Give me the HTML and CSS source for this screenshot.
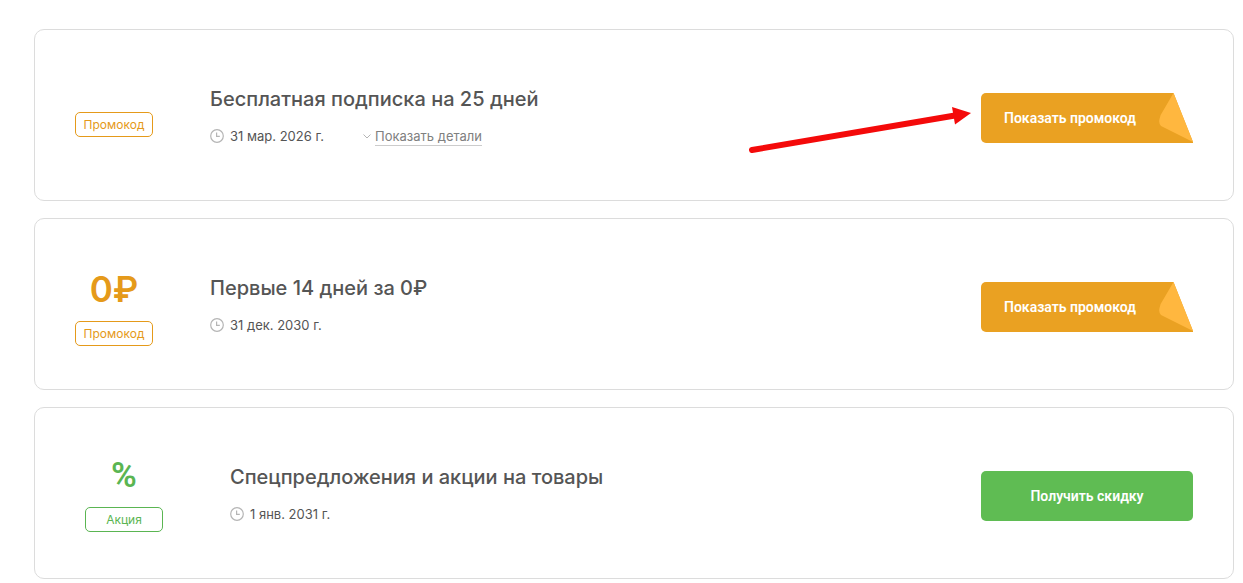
FILE: index.html
```html
<!DOCTYPE html>
<html lang="ru">
<head>
    <meta charset="UTF-8">
    <meta name="viewport" content="width=device-width, initial-scale=1.0">
    <title>Промокоды и акции</title>
    <link rel="stylesheet" href="styles.css">
</head>
<body>
    <svg class="sprite" aria-hidden="true">
        <symbol id="clock" viewBox="0 0 14 14">
            <circle cx="7" cy="7" r="6.3" fill="none" stroke="currentColor" stroke-width="1.2"/>
            <path d="M6.6 3.5V7.4H9.8" fill="none" stroke="currentColor" stroke-width="1.2"/>
        </symbol>
        <symbol id="corner" viewBox="0 0 34 50">
            <path d="M0 0H14.500L34 49V50H0Z" fill="#eaa122"/>
            <path d="M14.500 0L34 49L2 33Q-0.500 31 0.500 26Q1 22 4 18Z" fill="#ffb73f"/>
        </symbol>
    </svg>
    <main class="offers">
        <article class="offer">
            <div class="label label-single">
                <span class="badge">Промокод</span>
            </div>
            <div class="info">
                <h2 class="title">Бесплатная подписка на 25 дней</h2>
                <div class="meta">
                    <svg class="clock" aria-hidden="true"><use href="#clock"/></svg>
                    <span class="date">31 мар. 2026 г.</span>
                    <a class="details" href="#">
                        <svg class="chevron" viewBox="0 0 8 5" aria-hidden="true"><path d="M0.500 0.500L4 4L7.500 0.500" fill="none" stroke="currentColor"/></svg>
                        <span class="details-text">Показать детали</span>
                    </a>
                </div>
            </div>
            <div class="action">
                <svg class="arrow" viewBox="0 0 222 46" aria-hidden="true">
                    <path d="M3 43L206 8.500" stroke="#f40a0a" stroke-width="6" stroke-linecap="round"/>
                    <path d="M203 0L222 6L206 17.500Z" fill="#f40a0a"/>
                </svg>
                <button class="btn btn-code" type="button">
                    <span class="btn-text">Показать промокод</span>
                    <svg class="corner" aria-hidden="true"><use href="#corner"/></svg>
                </button>
            </div>
        </article>

        <article class="offer">
            <div class="label">
                <span class="value">0₽</span>
                <span class="badge">Промокод</span>
            </div>
            <div class="info">
                <h2 class="title">Первые 14 дней за 0₽</h2>
                <div class="meta">
                    <svg class="clock" aria-hidden="true"><use href="#clock"/></svg>
                    <span class="date">31 дек. 2030 г.</span>
                </div>
            </div>
            <div class="action">
                <button class="btn btn-code" type="button">
                    <span class="btn-text">Показать промокод</span>
                    <svg class="corner" aria-hidden="true"><use href="#corner"/></svg>
                </button>
            </div>
        </article>

        <article class="offer offer-sale">
            <div class="label">
                <span class="value">%</span>
                <span class="badge">Акция</span>
            </div>
            <div class="info">
                <h2 class="title">Спецпредложения и акции на товары</h2>
                <div class="meta">
                    <svg class="clock" aria-hidden="true"><use href="#clock"/></svg>
                    <span class="date">1 янв. 2031 г.</span>
                </div>
            </div>
            <div class="action">
                <button class="btn btn-sale" type="button">Получить скидку</button>
            </div>
        </article>
    </main>
</body>
</html>
```
FILE: styles.css
```css
* {
    box-sizing: border-box;
}
body {
    margin: 0;
    background: #fff;
    color: #555;
    font-family: Inter, "Noto Sans", sans-serif;
}
.sprite {
    display: none;
}
.offers {
    display: flex;
    flex-direction: column;
    gap: 17px;
    padding: 29px 9px 4px 34px;
}
.offer {
    display: flex;
    align-items: flex-start;
    gap: 57px;
    min-height: 172px;
    padding: 50px 40px 40px;
    border: 1px solid #dcdcdc;
    border-radius: 10px;
    color: #e59a1a;
}
.offer-sale {
    gap: 67px;
    padding-left: 50px;
    color: #5ab552;
}
.label {
    display: flex;
    flex-direction: column;
    gap: 12px;
    width: 78px;
    text-align: center;
}
.label-single {
    padding-top: 32px;
}
.offer-sale .label {
    gap: 13px;
}
.value {
    font-size: 35px;
    font-weight: 600;
    line-height: 40px;
}
.offer-sale .value {
    font-family: Roboto, sans-serif;
    font-weight: 600;
    line-height: 36px;
}
.badge {
    height: 25px;
    border: 1px solid currentColor;
    border-radius: 5px;
    font-size: 12px;
    line-height: 24px;
}
.info {
    flex: 1;
    padding-top: 6px;
}
.title {
    margin: 0 0 14px;
    color: #555;
    font-size: 20px;
    font-weight: 500;
    line-height: 26px;
}
.meta {
    display: flex;
    align-items: center;
    height: 20px;
    color: #555;
    font-size: 13px;
    line-height: 18px;
}
.clock {
    width: 14px;
    height: 14px;
    margin-right: 6px;
    color: #b5b5b5;
}
.details {
    display: flex;
    align-items: center;
    gap: 4px;
    margin-left: 39px;
    color: #808080;
    text-decoration: none;
}
.chevron {
    width: 8px;
    height: 5px;
    color: #b5b5b5;
}
.details-text {
    border-bottom: 1px solid #ccc;
}
.action {
    position: relative;
    width: 212px;
    padding-top: 13px;
}
.btn {
    display: flex;
    align-items: center;
    justify-content: center;
    width: 100%;
    height: 50px;
    padding: 0;
    border: 0;
    border-radius: 5px;
    color: #fff;
    font-family: Roboto, "Noto Sans", sans-serif;
    font-size: 14px;
    font-weight: 600;
    cursor: pointer;
}
.btn-code {
    background: none;
}
.btn-text {
    flex: 1;
    border-radius: 5px 0 0 5px;
    background: #eaa122;
    line-height: 50px;
}
.corner {
    width: 34px;
    height: 50px;
}
.btn-sale {
    background: #5fbc53;
}
/* red pointer to the first button */
.arrow {
    position: absolute;
    top: 27px;
    right: calc(100% + 10px);
    width: 222px;
    height: 46px;
}
```
